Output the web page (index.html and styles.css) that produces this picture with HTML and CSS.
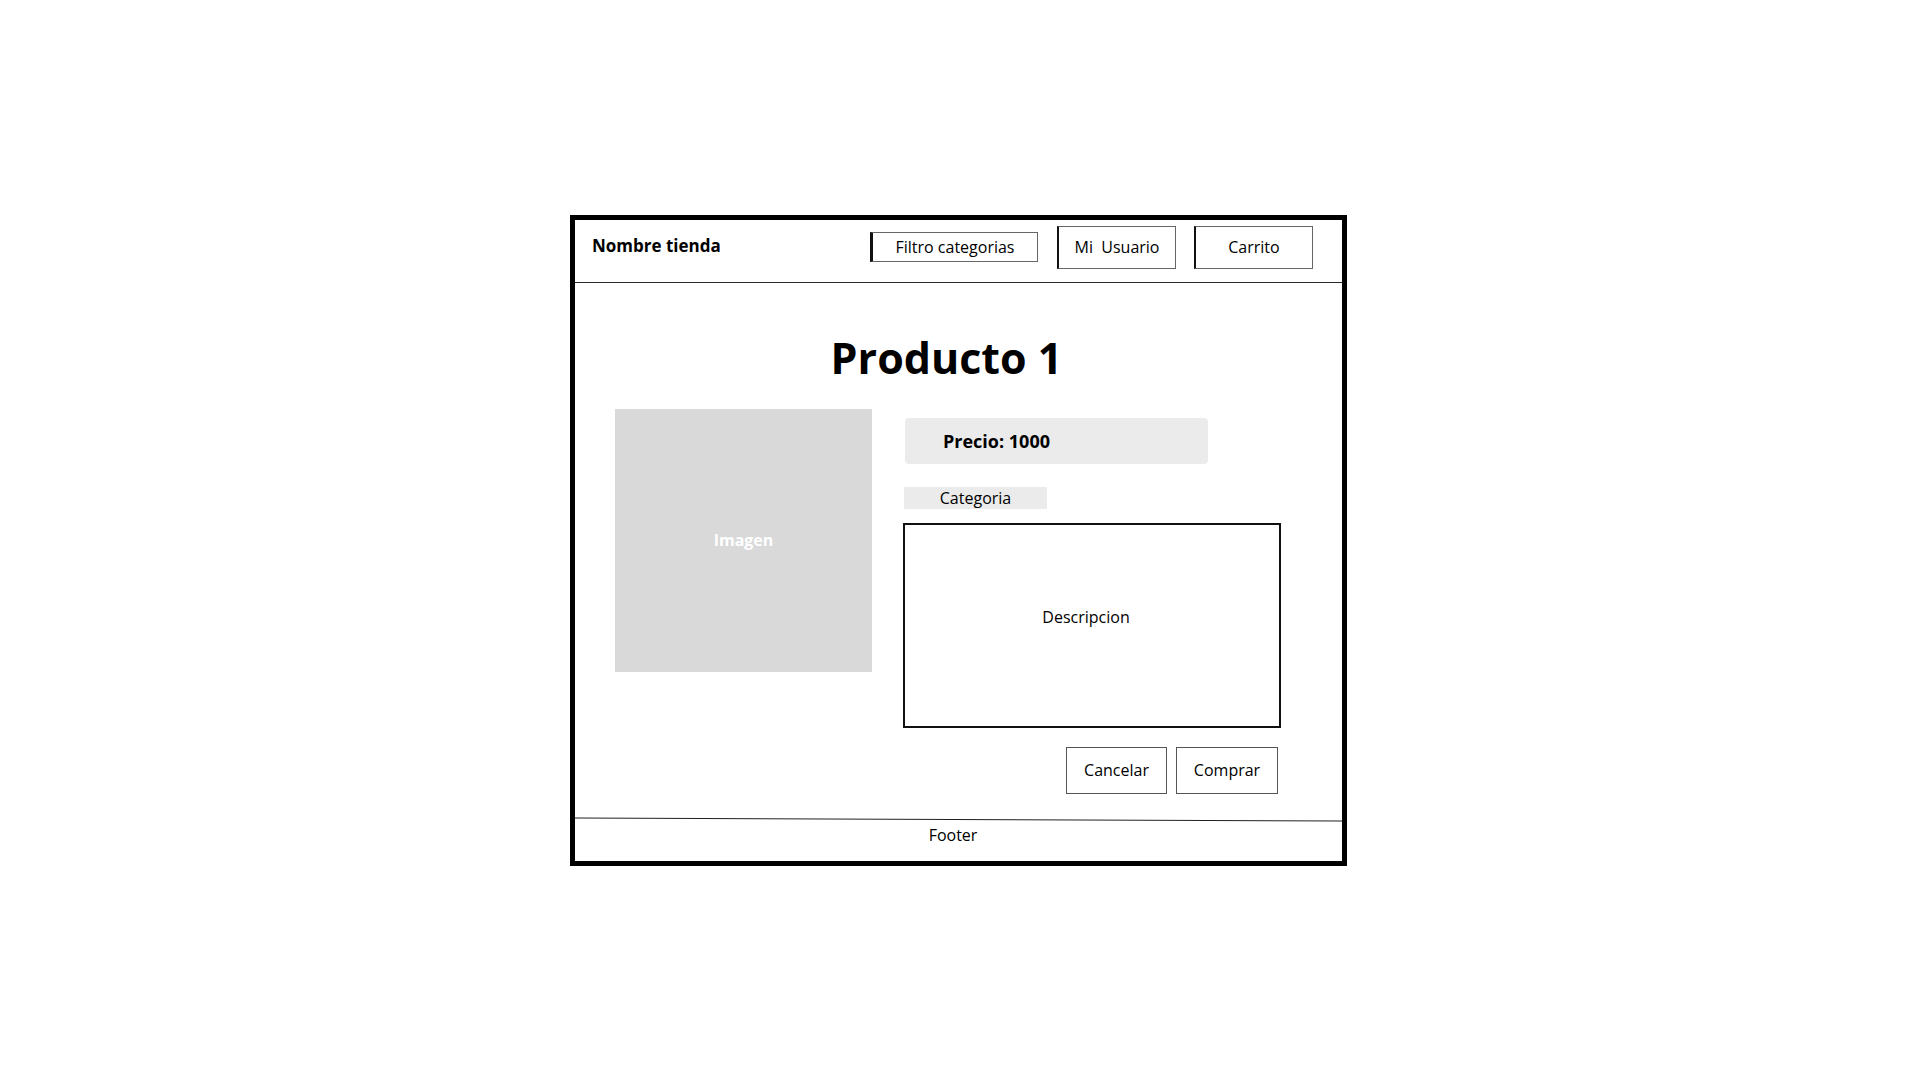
FILE: index.html
```html
<!DOCTYPE html>
<html lang="es">
<head>
    <meta charset="UTF-8">
    <meta name="viewport" content="width=device-width, initial-scale=1.0">
    <title>Producto 1</title>
    <link rel="stylesheet" href="styles.css">
</head>
<body>

    <div class="frame">
        <div class="header">
            <div class="brand">Nombre tienda</div>
            <div class="nav">
                <button class="nav-btn filter">Filtro categorias</button>
                <button class="nav-btn tall">Mi&nbsp; Usuario</button>
                <button class="nav-btn tall">Carrito</button>
            </div>
        </div>

        <div class="main">
            <h1 class="title">Producto 1</h1>
            <div class="product">
                <div class="image">Imagen</div>
                <div class="info">
                    <div class="price">Precio: 1000</div>
                    <div class="category">Categoria</div>
                    <div class="description">Descripcion</div>
                    <div class="actions">
                        <button class="action">Cancelar</button>
                        <button class="action buy">Comprar</button>
                    </div>
                </div>
            </div>
        </div>

        <div class="footer">
            <div class="footer-line"></div>
            <div class="footer-text">Footer</div>
        </div>
    </div>

</body>
</html>
```

FILE: styles.css
```css
body {
    align-items: center;
    background-color: #fff;
    display: flex;
    justify-content: center;
    height: 100vh;
    margin: 0; /* no default margin */
    font-family: "Open Sans", sans-serif;
    color: #000;
}

.frame {
    border: 5px solid #000;
    box-sizing: border-box;
    display: flex;
    flex-direction: column;
    height: 651px;
    margin-right: 3px;
    width: 777px;
}

/* top bar */
.header {
    align-items: center;
    border-bottom: 1px solid #2a2a2a;
    box-sizing: border-box;
    display: flex;
    height: 63px;
    padding: 0 29px 7px 17px;
}

.brand {
    font-size: 17px;
    font-weight: 700;
    margin-bottom: 3px;
}

.nav {
    align-items: center;
    display: flex;
    gap: 18px;
    margin-left: auto;
}

.nav-btn {
    background-color: #fff;
    border: 1px solid #666;
    border-left: 2px solid #111;
    box-sizing: border-box;
    color: #000;
    font-family: "Open Sans", sans-serif;
    font-size: 16px;
    height: 43px;
    padding: 0;
    width: 119px;
}

.filter {
    border-left: 3px solid #111;
    height: 30px;
    margin-right: 1px;
    width: 168px;
}

/* product */
.main {
    display: flex;
    flex: 1;
    flex-direction: column;
}

.title {
    font-size: 43px;
    font-weight: 700;
    line-height: 60px;
    margin: 45px 0 0;
    padding-right: 24px;
    text-align: center;
}

.product {
    display: flex;
    gap: 31px;
    margin-top: 21px;
    padding-left: 40px;
}

.image {
    align-items: center;
    background-color: #d9d9d9;
    color: #fff;
    display: flex;
    font-size: 16px;
    font-weight: 700;
    height: 263px;
    justify-content: center;
    width: 257px;
}

.info {
    display: flex;
    flex-direction: column;
    width: 378px;
}

.price {
    align-items: center;
    background-color: #ebebeb;
    border-radius: 4px;
    box-sizing: border-box;
    display: flex;
    font-size: 18px;
    font-weight: 700;
    height: 46px;
    margin: 9px 0 0 2px;
    padding-left: 38px;
    width: 303px;
}

.category {
    background-color: #ebebeb;
    font-size: 16px;
    height: 22px;
    line-height: 22px;
    margin: 23px 0 0 1px;
    text-align: center;
    width: 143px;
}

.description {
    align-items: center;
    border: 2px solid #111;
    box-sizing: border-box;
    display: flex;
    font-size: 16px;
    height: 205px;
    justify-content: center;
    margin-top: 14px;
    padding: 0 12px 16px 0;
}

.actions {
    display: flex;
    gap: 9px;
    justify-content: flex-end;
    margin-top: 19px;
    padding-right: 3px;
}

.action {
    background-color: #fff;
    border: 1px solid #555;
    box-sizing: border-box;
    color: #000;
    font-family: "Open Sans", sans-serif;
    font-size: 16px;
    height: 47px;
    padding: 0;
    width: 101px;
}

.buy {
    width: 102px;
}

/* bottom */
.footer {
    height: 42px;
}

.footer-line {
    background-color: #222;
    height: 1px;
    transform: rotate(0.22deg);
}

.footer-text {
    font-size: 16px;
    line-height: 22px;
    padding: 4px 11px 0 0;
    text-align: center;
}
```
